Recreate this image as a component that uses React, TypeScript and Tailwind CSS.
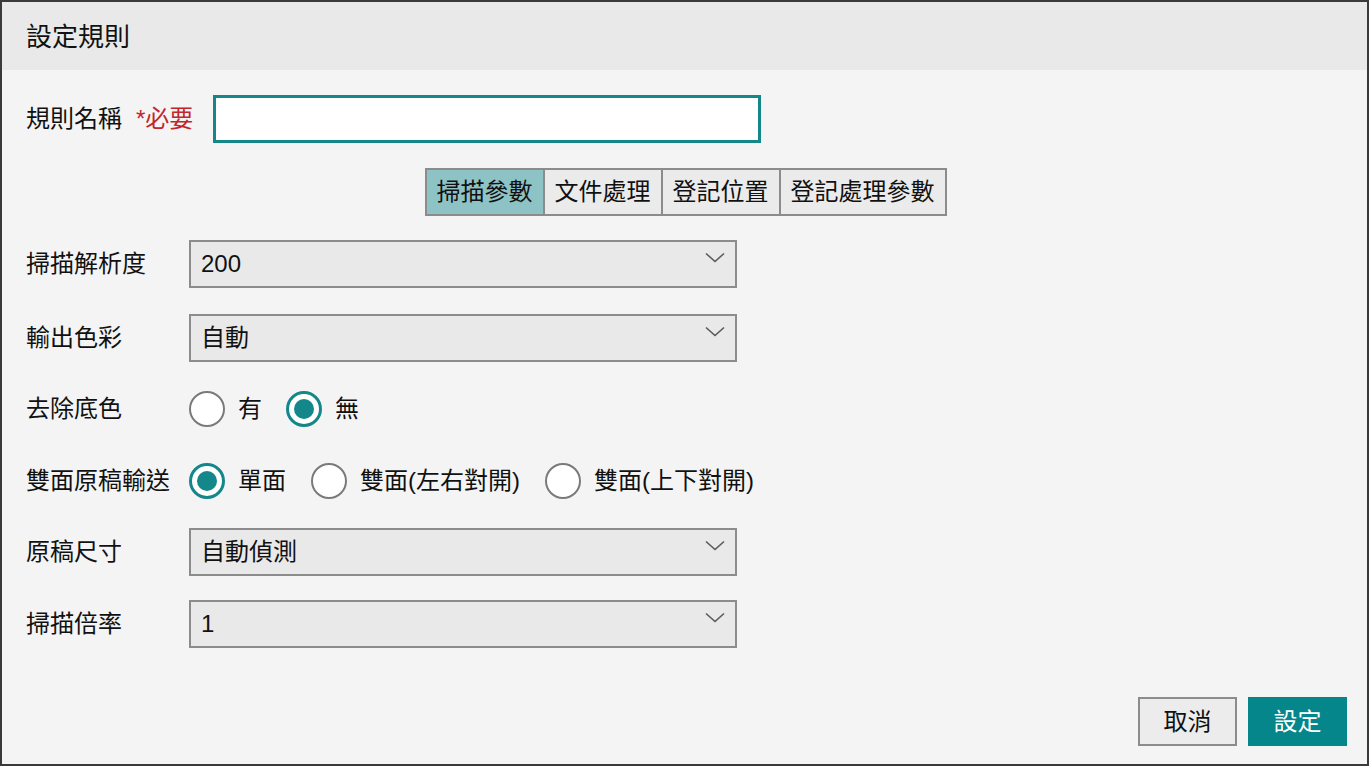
import React, { useState } from 'react';

const font = "font-['Liberation_Sans','Noto_Sans_CJK_TC',sans-serif]";

function Chevron() {
  return (
    <svg width="20" height="11" viewBox="0 0 20 11" fill="none" className="shrink-0">
      <path d="M1 1.5 L10 9.5 L19 1.5" stroke="#5a5a5a" strokeWidth="1.6" />
    </svg>
  );
}

function Select({ value }: { value: string }) {
  return (
    <div className="w-[548px] h-[48px] border-2 border-[#8c8c8c] bg-[#e9e9e9] flex items-center justify-between pl-[10px] pr-[10px]">
      <span className="text-[24px] leading-none text-[#111]">{value}</span>
      <div className="-mt-[14px]">
        <Chevron />
      </div>
    </div>
  );
}

function Radio({ checked, label, onClick }: { checked: boolean; label: string; onClick: () => void }) {
  return (
    <button type="button" onClick={onClick} className="flex items-center gap-[13px]">
      {checked ? (
        <span className="w-[36px] h-[36px] rounded-full border-[3px] border-[#13878a] bg-white flex items-center justify-center">
          <span className="w-[20px] h-[20px] rounded-full bg-[#13878a]" />
        </span>
      ) : (
        <span className="w-[36px] h-[36px] rounded-full border-2 border-[#7a7a7a] bg-white" />
      )}
      <span className="text-[24px] leading-none text-[#111]">{label}</span>
    </button>
  );
}

function Row({ label, className, children }: { label: string; className: string; children: React.ReactNode }) {
  return (
    <div className={`flex items-center h-[48px] ${className}`}>
      <div className="w-[163px] text-[24px] leading-none text-[#111]">{label}</div>
      {children}
    </div>
  );
}

export default function App() {
  const [tab, setTab] = useState(0);
  const [bg, setBg] = useState(1);
  const [duplex, setDuplex] = useState(0);
  const tabs = ['掃描參數', '文件處理', '登記位置', '登記處理參數'];

  return (
    <div className={`w-[1369px] h-[766px] border-2 border-[#3a3a3a] bg-[#f4f4f4] flex flex-col ${font}`}>
      <div className="h-[68px] bg-[#e9e9e9] flex items-center pl-[24px] pt-[2px]">
        <span className="text-[26px] leading-none text-[#111]">設定規則</span>
      </div>

      <div className="flex-1 flex flex-col pl-[24px] pr-[20px] pt-[25px]">
        <div className="flex flex-col">
          <div className="flex items-center h-[48px]">
            <span className="text-[24px] leading-none text-[#111]">規則名稱</span>
            <span className="ml-[14px] text-[24px] leading-none text-[#c0262d]">*必要</span>
            <input className="ml-[20px] w-[548px] h-[48px] border-[3px] border-[#13878a] bg-white outline-none px-2 text-[22px]" />
          </div>

          <div className="flex justify-center h-[48px] mt-[25px] pr-[2px]">
            <div className="flex border-2 border-[#8c8c8c]">
              {tabs.map((t, i) => (
                <button
                  key={t}
                  type="button"
                  onClick={() => setTab(i)}
                  className={`px-[10px] text-[24px] leading-none text-[#111] ${i > 0 ? 'border-l-2 border-[#8c8c8c]' : ''} ${tab === i ? 'bg-[#8ec3c6]' : 'bg-[#ebebeb]'}`}
                >
                  {t}
                </button>
              ))}
            </div>
          </div>

          <Row label="掃描解析度" className="mt-[24px]">
            <Select value="200" />
          </Row>
          <Row label="輸出色彩" className="mt-[26px]">
            <Select value="自動" />
          </Row>
          <Row label="去除底色" className="mt-[23px]">
            <div className="flex items-center gap-[24px]">
              <Radio checked={bg === 0} label="有" onClick={() => setBg(0)} />
              <Radio checked={bg === 1} label="無" onClick={() => setBg(1)} />
            </div>
          </Row>
          <Row label="雙面原稿輸送" className="mt-[24px]">
            <div className="flex items-center gap-[25px]">
              <Radio checked={duplex === 0} label="單面" onClick={() => setDuplex(0)} />
              <Radio checked={duplex === 1} label="雙面(左右對開)" onClick={() => setDuplex(1)} />
              <Radio checked={duplex === 2} label="雙面(上下對開)" onClick={() => setDuplex(2)} />
            </div>
          </Row>
          <Row label="原稿尺寸" className="mt-[23px]">
            <Select value="自動偵測" />
          </Row>
          <Row label="掃描倍率" className="mt-[24px]">
            <Select value="1" />
          </Row>
        </div>

        <div className="flex justify-end gap-[11px] mt-[49px]">
          <button type="button" className="w-[99px] h-[49px] border-2 border-[#8c8c8c] bg-[#ececec] text-[24px] leading-none text-[#111]">
            取消
          </button>
          <button type="button" className="w-[99px] h-[49px] bg-[#04868a] text-[24px] leading-none text-white">
            設定
          </button>
        </div>
      </div>
    </div>
  );
}
